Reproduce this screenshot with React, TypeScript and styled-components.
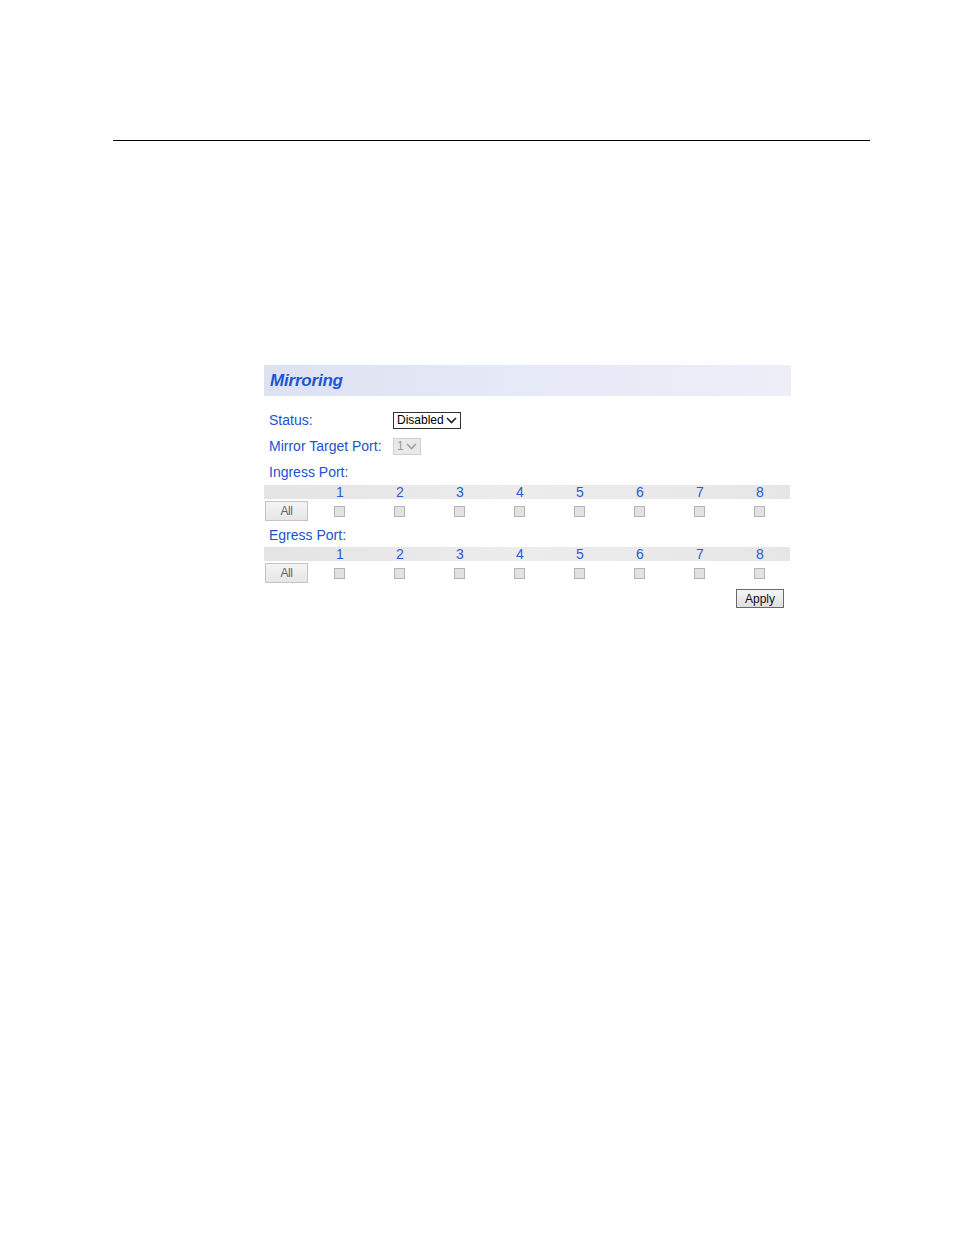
import React from "react";
import styled, { createGlobalStyle } from "styled-components";

const Global = createGlobalStyle`
  html, body { margin: 0; padding: 0; background: #ffffff; }
  body { font-family: "Liberation Sans", Arial, sans-serif; }
`;

const Page = styled.div`
  width: 954px;
  height: 1235px;
  padding-top: 140px;
  box-sizing: border-box;
`;

const Rule = styled.div`
  margin: 0 84px 0 113px;
  height: 1px;
  background: #000;
`;

const Panel = styled.div`
  margin: 224px 0 0 264px;
  width: 527px;
`;

const Header = styled.div`
  height: 31px;
  display: flex;
  align-items: center;
  padding-left: 6px;
  background: linear-gradient(to right, #dde1f2 0%, #e6e9f6 50%, #eceef8 100%);
`;

const Title = styled.h1`
  margin: 0;
  font-size: 17px;
  font-weight: bold;
  font-style: italic;
  color: #1d56d4;
  letter-spacing: -0.2px;
`;

const Form = styled.div`
  padding-top: 11px;
`;

const FieldRow = styled.div<{ $height?: number }>`
  height: ${(p) => p.$height ?? 26}px;
  display: grid;
  grid-template-columns: 129px 1fr;
  align-items: center;
`;

const Label = styled.span`
  padding-left: 5px;
  font-size: 14px;
  color: #2151d0;
  white-space: nowrap;
`;

const SelectBox = styled.div<{ $disabled?: boolean; $width: number }>`
  width: ${(p) => p.$width}px;
  height: 17px;
  box-sizing: border-box;
  display: flex;
  align-items: center;
  justify-content: space-between;
  padding: 0 3px 0 3px;
  border: 1px solid ${(p) => (p.$disabled ? "#cfcfcf" : "#333")};
  background: ${(p) => (p.$disabled ? "#e9e9e9" : "#fff")};
  color: ${(p) => (p.$disabled ? "#9a9a9a" : "#000")};
  font-size: 12px;
`;

const Chevron = ({ color }: { color: string }) => (
  <svg width="11" height="7" viewBox="0 0 11 7">
    <path d="M1 1 L5.5 5.5 L10 1" fill="none" stroke={color} strokeWidth="1.6" />
  </svg>
);

const PortGrid = styled.div`
  display: grid;
  grid-template-columns: 46px repeat(8, 60px);
`;

const NumBand = styled.div`
  grid-column: 1 / -1;
  display: grid;
  grid-template-columns: 46px repeat(8, 60px);
  height: 14px;
  background: linear-gradient(to right, #e4e4e4, #ececec 50%, #e6e6e6);
  align-items: center;
`;

const Num = styled.span`
  text-align: center;
  font-size: 14px;
  line-height: 14px;
  color: #2a5bd6;
`;

const CheckRow = styled.div`
  grid-column: 1 / -1;
  display: grid;
  grid-template-columns: 46px repeat(8, 60px);
  height: 24px;
  align-items: center;
`;

const AllButton = styled.button`
  margin-left: 1px;
  width: 43px;
  height: 20px;
  padding: 0;
  border: 1px solid #c4c4c4;
  background: linear-gradient(#f4f4f4, #e6e6e6);
  color: #666;
  font-family: "Liberation Sans", Arial, sans-serif;
  font-size: 12px;
  letter-spacing: -0.5px;
`;

const Check = styled.span`
  justify-self: center;
  margin-right: 2px;
  width: 11px;
  height: 11px;
  box-sizing: border-box;
  border: 1px solid #b4b4b4;
  background: #e2e2e2;
`;

const ApplyRow = styled.div`
  display: flex;
  justify-content: flex-end;
  padding: 4px 7px 0 0;
`;

const ApplyButton = styled.button`
  width: 48px;
  height: 19px;
  padding: 0;
  border: 1px solid #6a6a6a;
  background: linear-gradient(#f6f6f6, #dedede);
  color: #111;
  font-family: "Liberation Sans", Arial, sans-serif;
  font-size: 12px;
`;

const ports = [1, 2, 3, 4, 5, 6, 7, 8];

const PortTable = () => (
  <PortGrid>
    <NumBand>
      <span />
      {ports.map((p) => (
        <Num key={p}>{p}</Num>
      ))}
    </NumBand>
    <CheckRow>
      <AllButton>All</AllButton>
      {ports.map((p) => (
        <Check key={p} />
      ))}
    </CheckRow>
  </PortGrid>
);

export default function App() {
  return (
    <Page>
      <Global />
      <Rule />
      <Panel>
        <Header>
          <Title>Mirroring</Title>
        </Header>
        <Form>
          <FieldRow>
            <Label>Status:</Label>
            <SelectBox $width={68}>
              <span>Disabled</span>
              <Chevron color="#222" />
            </SelectBox>
          </FieldRow>
          <FieldRow>
            <Label>Mirror Target Port:</Label>
            <SelectBox $width={28} $disabled>
              <span>1</span>
              <Chevron color="#a0a0a0" />
            </SelectBox>
          </FieldRow>
          <FieldRow>
            <Label>Ingress Port:</Label>
          </FieldRow>
          <PortTable />
          <FieldRow $height={24}>
            <Label>Egress Port:</Label>
          </FieldRow>
          <PortTable />
          <ApplyRow>
            <ApplyButton>Apply</ApplyButton>
          </ApplyRow>
        </Form>
      </Panel>
    </Page>
  );
}
